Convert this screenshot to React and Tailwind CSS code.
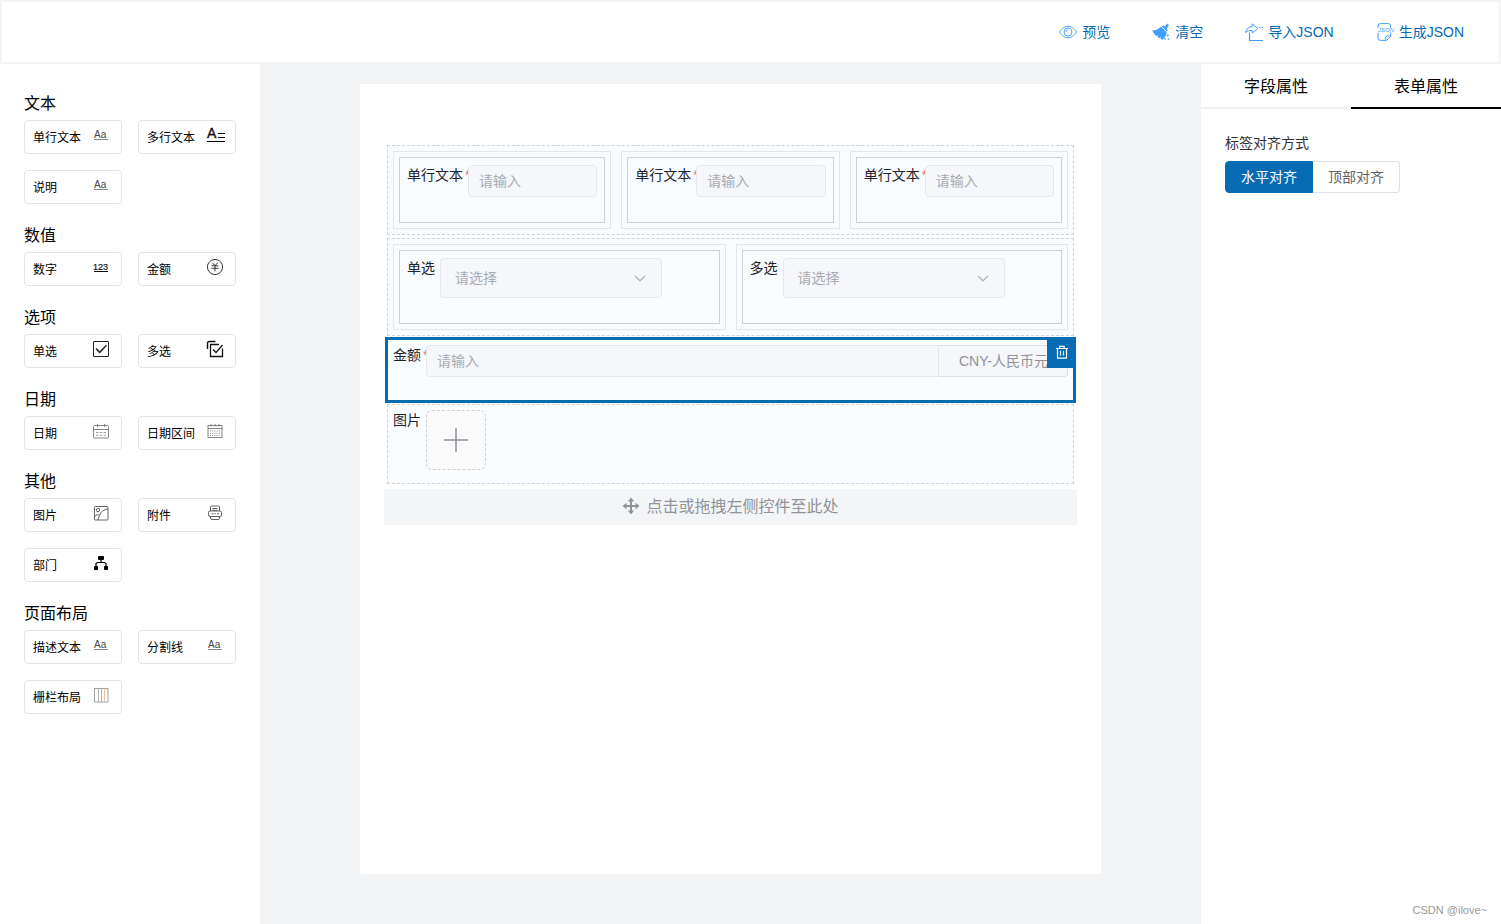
import React, { useState } from "react";

const iconProps = {
  width: 18,
  height: 18,
  viewBox: "0 0 18 18",
  fill: "none",
  className: "shrink-0 overflow-visible",
  "aria-hidden": true,
};

/* ---------- toolbar icons ---------- */

const EyeIcon = () => (
  <svg {...iconProps} stroke="#409eff">
    <path d="M.5 9C3 5 5.800 3.300 9 3.300s6 1.700 8.500 5.700c-2.500 4-5.300 5.700-8.500 5.700S3 13 .5 9z" strokeWidth="1" />
    <circle cx="9" cy="9" r="4" strokeWidth=".9" />
    <path d="M6.800 9A2.200 2.200 0 0 1 9 6.800" strokeWidth=".9" />
  </svg>
);

const BroomIcon = () => (
  <svg {...iconProps} fill="#409eff">
    <path d="M15.300.6 17 2.200l-2.300 3.300 1 1.600-.9 1.300-5-5 1.400-.9 1.700.7z" />
    <path d="M9 3.800l5.600 5.400c-.2 3-1.600 5.600-4.400 7.600l-1.900-1 .8-2.200-1.900 1.600-1.700-1.300.7-2-1.800 1.200C2.600 11.600 1.200 9.600.2 7.400 3.600 7.400 6.800 6.300 9 3.800z" />
    <path d="m15.800 10.500.5 1.200 1.200.5-1.200.5-.5 1.200-.5-1.200-1.200-.5 1.200-.5zM13 14.500l.4 1 1 .4-1 .4-.4 1-.4-1-1-.4 1-.4zM16.500 14.800l.4 1 1 .4-1 .4-.4 1-.4-1-1-.4 1-.4z" />
  </svg>
);

const ImportIcon = () => (
  <svg {...iconProps} stroke="#409eff" strokeLinejoin="round">
    <path d="M.6 9.600C1 5.800 3.600 3.800 7.200 3.700V.8L12.800 5.500 7.200 10V7.500C4.200 7.300 2 8 .6 9.600z" />
    <path d="M4.500 9.500v8H18" strokeWidth="1.200" />
    <path d="M13.800 4.500h1.700M16.500 4.500H18" strokeWidth=".8" />
  </svg>
);

const JsonFileIcon = () => (
  <svg {...iconProps} stroke="#409eff">
    <path d="M2 5V3Q2 .6 4.200.6h8.200Q14.600.6 14.600 3v2M2 9.500V15q0 2.400 2.200 2.400h6.300l4.100-4.100V9.500" />
    <path d="M9.800 17v-2.500q0-1.600 1.600-1.600h3" />
    <text x="2" y="9" fontSize="6" fontStyle="italic" fill="#409eff" stroke="none">JSON</text>
  </svg>
);

/* ---------- widget icons ---------- */

const TextIcon = () => (
  <svg {...iconProps}>
    <text x="2" y="12" fontSize="10" fill="#444">Aa</text>
    <path d="M2 13.500h14" stroke="#888" />
  </svg>
);

const TextareaIcon = () => (
  <svg {...iconProps} stroke="#000">
    <text x="1" y="12" fontSize="14" fill="#111" stroke="#111" strokeWidth=".4">A</text>
    <path d="M12 7.500h7M12 11.500h7M1 15.500h18" strokeWidth="1.200" />
  </svg>
);

const NumberIcon = () => (
  <svg {...iconProps}>
    <text x="1" y="12" fontSize="9" fill="#111" stroke="#111" strokeWidth=".2">123</text>
    <path d="M2 13.500h14" stroke="#111" />
  </svg>
);

const MoneyIcon = () => (
  <svg {...iconProps} stroke="#222" strokeWidth=".9">
    <circle cx="9" cy="9" r="7.600" />
    <path d="m6.500 4.800 2.500 3 2.500-3M5.500 7.800h7M5.500 10.300h7M9 7.800v5.500" />
  </svg>
);

const CheckIcon = () => (
  <svg {...iconProps} stroke="#222">
    <rect x="1.500" y="1.500" width="15" height="15" rx=".5" />
    <path d="m4 8.500 3.700 3.800 6.800-7" strokeWidth="1.500" />
  </svg>
);

const MultiCheckIcon = () => (
  <svg {...iconProps} stroke="#111">
    <path d="M1.500 9V3.500q0-2 2-2H9.500" strokeWidth="1.400" />
    <path d="M13 4.500H4.500v12h12V8.500" strokeWidth="1.300" />
    <path d="m7 9.500 3 3 6.500-7.500" strokeWidth="1.300" />
  </svg>
);

const CalendarIcon = () => (
  <svg {...iconProps} stroke="#777" strokeWidth=".9">
    <rect x="1.500" y="3.500" width="15" height="12.500" rx="1" />
    <path d="M1.500 7.500h15M5.500 2v3M12.500 2v3" />
    <path d="M4 10.500h2.500M7.700 10.500h2.500M11.500 10.500H14M4 13.300h2.500M7.700 13.300h2.500M11.500 13.300H14" stroke="#999" />
  </svg>
);

const CalendarRangeIcon = () => (
  <svg {...iconProps} stroke="#777" strokeWidth=".9">
    <rect x="2" y="3.500" width="14" height="12" />
    <path d="M2 6.500h14M5 2v2.500M9 2v2.500M13 2v2.500" />
    <path d="M4 9h10M4 11.300h10M4 13.500h10" strokeDasharray="1 1.200" />
  </svg>
);

const ImageIcon = () => (
  <svg {...iconProps} stroke="#555" strokeWidth=".9">
    <rect x="2.500" y="2.500" width="13.500" height="13.500" rx=".8" />
    <circle cx="6" cy="6" r="1.700" />
    <path d="M2.500 12.500c2-2 3.500-2.300 5-1 1.500-4 4.500-6.200 8.500-6.500M7.500 11.500 5.800 16" />
  </svg>
);

const PrinterIcon = () => (
  <svg {...iconProps} stroke="#555" strokeWidth=".9">
    <path d="M4.500 7V3q0-1 1-1h7q1 0 1 1v4M6.500 4.500h5M6.500 6.300h5" />
    <rect x="2.500" y="7" width="13" height="5.500" rx="1.500" />
    <path d="M4.500 12.500V14q0 1.500 1.500 1.500h6q1.500 0 1.500-1.500v-1.500M5.500 9.800h2M8.500 9.800h1.500M11 9.800h2" />
  </svg>
);

const DeptIcon = () => (
  <svg {...iconProps} fill="#000" stroke="#000">
    <path d="M6.500 2.500h5v3h-5zM2.500 12.500h3v3h-3zM12.500 12.500h3v3h-3z" />
    <path d="M9 6v3M4 12V9.500L5.500 8.500h7L14 9.500V12" fill="none" strokeWidth="1.200" />
  </svg>
);

const GridIcon = () => (
  <svg {...iconProps} strokeWidth=".9">
    <rect x="2.500" y="2.500" width="13.500" height="13.500" stroke="#999" />
    <path d="M6.500 2.500v13.500M9.500 2.500v13.500" stroke="#aaa" />
    <path d="M12.500 2.500v13.500" stroke="#f0b48c" />
  </svg>
);

/* ---------- canvas icons ---------- */

const ChevronIcon = () => (
  <svg className="pointer-events-none absolute right-4 top-[14px]" width="12" height="12" viewBox="0 0 12 12" fill="none" stroke="#b0b3ba" strokeWidth="1.200" aria-hidden="true">
    <path d="m1 4 5 4.800L11 4" />
  </svg>
);

const TrashIcon = () => (
  <svg className="mb-0.5" width="14" height="14" viewBox="0 0 14 14" fill="none" stroke="#fff" strokeWidth="1.200" aria-hidden="true">
    <path d="M1 3.500h12M4.800 3.300V1.300h4.400v2M2.500 3.500v9.700h9V3.500M5.500 5.800v4.700M8.500 5.800v4.700" />
  </svg>
);

const MoveIcon = () => (
  <svg className="mb-0.5" width="18" height="18" viewBox="0 0 18 18" fill="#909399" aria-hidden="true">
    <path d="M8 8V4.500H5.800L9 .5l3.200 4H10V8h3.500V5.800l4 3.200-4 3.200V10H10v3.500h2.200L9 17.500l-3.200-4H8V10H4.500v2.200L.5 9l4-3.200V8z" />
  </svg>
);

const toolbar = [
  { label: "预览", Icon: EyeIcon },
  { label: "清空", Icon: BroomIcon },
  { label: "导入JSON", Icon: ImportIcon },
  { label: "生成JSON", Icon: JsonFileIcon },
];

const groups = [
  {
    title: "文本",
    items: [
      { label: "单行文本", Icon: TextIcon },
      { label: "多行文本", Icon: TextareaIcon },
      { label: "说明", Icon: TextIcon },
    ],
  },
  {
    title: "数值",
    items: [
      { label: "数字", Icon: NumberIcon },
      { label: "金额", Icon: MoneyIcon },
    ],
  },
  {
    title: "选项",
    items: [
      { label: "单选", Icon: CheckIcon },
      { label: "多选", Icon: MultiCheckIcon },
    ],
  },
  {
    title: "日期",
    items: [
      { label: "日期", Icon: CalendarIcon },
      { label: "日期区间", Icon: CalendarRangeIcon },
    ],
  },
  {
    title: "其他",
    items: [
      { label: "图片", Icon: ImageIcon },
      { label: "附件", Icon: PrinterIcon },
      { label: "部门", Icon: DeptIcon },
    ],
  },
  {
    title: "页面布局",
    items: [
      { label: "描述文本", Icon: TextIcon },
      { label: "分割线", Icon: TextIcon },
      { label: "栅栏布局", Icon: GridIcon },
    ],
  },
];

const Header = () => (
  <header className="flex h-16 items-center justify-end gap-[42px] border-2 border-[#f4f4f5] bg-white pr-[35px]">
    {toolbar.map(({ label, Icon }) => (
      <button key={label} type="button" className="flex items-center gap-[5px] text-sm text-[#066bb3]">
        <Icon />
        {label}
      </button>
    ))}
  </header>
);

const WidgetPanel = () => (
  <aside className="w-[260px] shrink-0 bg-white px-6 pt-6">
    {groups.map((group) => (
      <section key={group.title} className="mb-4">
        <h2 className="text-base leading-8 text-black">{group.title}</h2>
        <div className="grid grid-cols-2 gap-4">
          {group.items.map(({ label, Icon }) => (
            <button
              key={label}
              type="button"
              className="flex h-[34px] items-center justify-between rounded border border-[#e4e4e6] pt-0.5 pl-2 pr-[11px] text-xs text-black"
            >
              {label}
              <span className="mb-1.5">
                <Icon />
              </span>
            </button>
          ))}
        </div>
      </section>
    ))}
  </aside>
);

const FieldLabel = ({ htmlFor, wide, required, children }) => (
  <label
    htmlFor={htmlFor}
    className={`shrink-0 whitespace-nowrap text-sm leading-5 text-[#1f2329] ${wide ? "w-[61px]" : "w-[33px]"}`}
  >
    {children}
    {required && <span className="ml-0.5 text-[#f56c6c]">*</span>}
  </label>
);

// relative keeps the box above the end of its label
const inputClass =
  "relative h-8 min-w-0 flex-1 border border-[#e4e7ed] bg-[#f5f7fa] px-[10px] text-sm text-[#606266] outline-none placeholder:text-[#a8abb2]";

// Layout row: dashed frame around its cells
const Row = ({ children }) => (
  <div className="mx-[3px] flex gap-[10px] border border-dashed border-[#cfd3d8] bg-[#f8fcff] p-[5px]">{children}</div>
);

const Cell = ({ children }) => (
  <div className="min-w-0 flex-1 border border-[#e2e5e9] p-[5px]">
    <div className="flex border border-[#cdd1d6] px-[7px] pt-[7px] pb-[25px]">{children}</div>
  </div>
);

const SelectField = ({ id, label }) => (
  <>
    <FieldLabel htmlFor={id}>{label}</FieldLabel>
    <div className="relative w-[222px]">
      <select
        id={id}
        defaultValue=""
        className="block h-10 w-full appearance-none rounded border border-[#e4e7ed] bg-[#f5f7fa] px-[14px] text-sm text-[#a8abb2] outline-none"
      >
        <option value="">请选择</option>
      </select>
      <ChevronIcon />
    </div>
  </>
);

const FormCanvas = () => (
  <main className="flex min-w-0 flex-1 flex-col bg-[#f1f3f5] px-[100px] pt-5 pb-[50px]">
    <div className="flex-1 bg-white px-6 pt-[61px]">
      <div className="flex flex-col gap-[3px]">
        <Row>
          {["text1", "text2", "text3"].map((id) => (
            <Cell key={id}>
              <FieldLabel htmlFor={id} wide required>单行文本</FieldLabel>
              <input id={id} type="text" placeholder="请输入" className={`rounded ${inputClass}`} />
            </Cell>
          ))}
        </Row>
        <Row>
          <Cell>
            <SelectField id="radio" label="单选" />
          </Cell>
          <Cell>
            <SelectField id="multi" label="多选" />
          </Cell>
        </Row>

        {/* selected row */}
        <div className="relative mx-px -my-0.5 flex border-[3px] border-[#066bb3] bg-[#f8fcff] px-[5px] pt-[5px] pb-[23px]">
          <FieldLabel htmlFor="money" required>金额</FieldLabel>
          <input id="money" type="text" placeholder="请输入" className={`rounded-l ${inputClass}`} />
          <span className="flex h-8 w-[129px] items-center whitespace-nowrap rounded-r border border-l-0 border-[#dcdfe6] bg-[#f5f7fa] pl-5 text-sm text-[#909399]">
            CNY-人民币元
          </span>
          <button
            type="button"
            aria-label="删除"
            className="absolute -right-[3px] -top-[3px] flex h-[31px] w-[29px] items-center justify-center bg-[#066bb3]"
          >
            <TrashIcon />
          </button>
        </div>

        <div className="mx-[3px] flex border border-dashed border-[#cfd3d8] bg-[#f8fcff] px-[5px] pt-[5px] pb-[13px]">
          <FieldLabel htmlFor="upload">图片</FieldLabel>
          <button
            id="upload"
            type="button"
            aria-label="图片"
            className="flex h-[60px] w-[60px] items-center justify-center rounded-md border border-dashed border-[#cdd0d6] bg-[#fafafa]"
          >
            <svg width="24" height="24" viewBox="0 0 24 24" stroke="#8c939d" strokeWidth="1.500" aria-hidden="true">
              <path d="M12 0v24M0 12h24" />
            </svg>
          </button>
        </div>
      </div>

      <div className="mt-[5px] flex h-9 items-center justify-center gap-[6px] bg-[#f4f5f7] text-base text-[#909399]">
        <MoveIcon />
        点击或拖拽左侧控件至此处
      </div>
    </div>
  </main>
);

const PropertyPanel = () => {
  const [tab, setTab] = useState("form");
  const [align, setAlign] = useState("horizontal");

  return (
    <aside className="flex w-[300px] shrink-0 flex-col bg-white">
      <div className="flex">
        {[
          { key: "field", label: "字段属性" },
          { key: "form", label: "表单属性" },
        ].map(({ key, label }) => (
          <button
            key={key}
            type="button"
            onClick={() => setTab(key)}
            className={`h-[45px] flex-1 border-b-2 pt-0.5 text-base text-black ${tab === key ? "border-black" : "border-[#f1f1f3]"}`}
          >
            {label}
          </button>
        ))}
      </div>

      <fieldset className="px-6 pt-6">
        <legend className="float-left w-full text-sm leading-5 text-[#303133]">标签对齐方式</legend>
        <div className="clear-both flex pt-2">
          {[
            { key: "horizontal", label: "水平对齐", shape: "rounded-l" },
            { key: "top", label: "顶部对齐", shape: "rounded-r border-l-0" },
          ].map(({ key, label, shape }) => (
            <label
              key={key}
              className={`relative flex h-8 cursor-pointer items-center border px-[15px] text-sm ${shape} ${
                align === key ? "border-[#066bb3] bg-[#066bb3] text-white" : "border-[#dcdfe6] bg-white text-[#606266]"
              }`}
            >
              <input type="radio" name="align" className="sr-only" checked={align === key} onChange={() => setAlign(key)} />
              {label}
            </label>
          ))}
        </div>
      </fieldset>

      <p className="mt-auto pr-[14px] pb-1 text-right text-[11px] leading-5 text-[#999]">CSDN @ilove~</p>
    </aside>
  );
};

const App = () => (
  <div className="flex min-h-screen flex-col bg-white font-['Liberation_Sans','Noto_Sans_CJK_SC',sans-serif]">
    <Header />
    <div className="flex flex-1">
      <WidgetPanel />
      <FormCanvas />
      <PropertyPanel />
    </div>
  </div>
);

export default App;
